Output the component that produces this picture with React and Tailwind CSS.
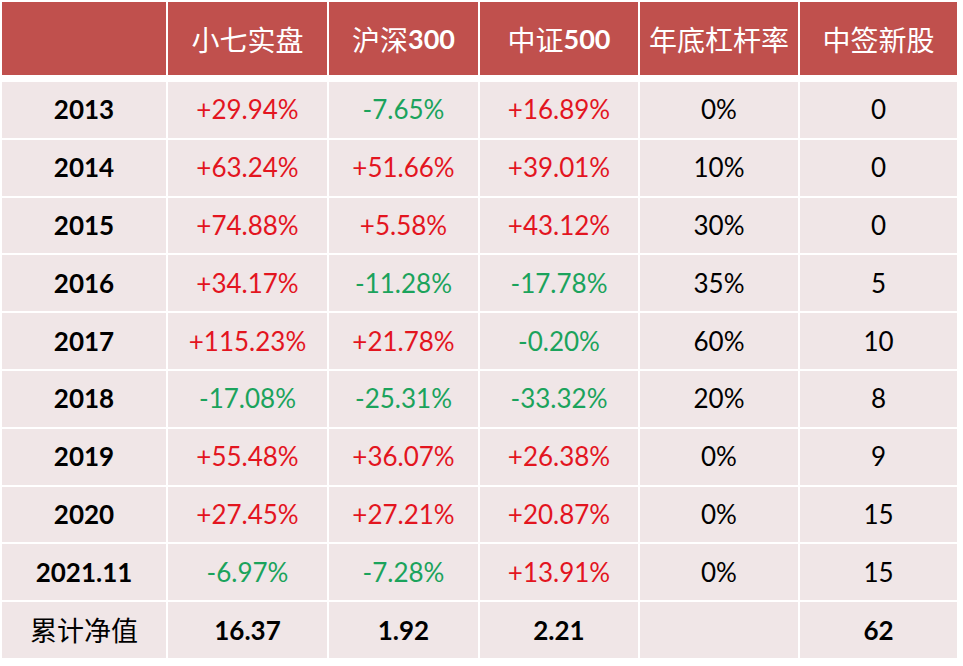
import React from "react";

const RED = "text-[#e3151f]";
const GREEN = "text-[#1ba35c]";

const rows = [
  ["2013", "+29.94%", "-7.65%", "+16.89%", "0%", "0"],
  ["2014", "+63.24%", "+51.66%", "+39.01%", "10%", "0"],
  ["2015", "+74.88%", "+5.58%", "+43.12%", "30%", "0"],
  ["2016", "+34.17%", "-11.28%", "-17.78%", "35%", "5"],
  ["2017", "+115.23%", "+21.78%", "-0.20%", "60%", "10"],
  ["2018", "-17.08%", "-25.31%", "-33.32%", "20%", "8"],
  ["2019", "+55.48%", "+36.07%", "+26.38%", "0%", "9"],
  ["2020", "+27.45%", "+27.21%", "+20.87%", "0%", "15"],
  ["2021.11", "-6.97%", "-7.28%", "+13.91%", "0%", "15"],
];

const cols = "grid grid-cols-[164px_159px_149px_158px_158px_157px] gap-x-[2px]";
const cjk = "font-['Noto_Sans_CJK_SC',serif]";
const num = "font-['Lato','Noto_Sans_CJK_SC',sans-serif]";

const Head = ({ cn, digits }) => (
  <div className="bg-[#c0504d] flex items-center justify-center text-white">
    <span className={`${cjk} text-[28px] leading-none`}>{cn}</span>
    {digits && <span className={`${num} font-bold text-[27px] leading-none`}>{digits}</span>}
  </div>
);

const Cell = ({ children, className = "" }) => (
  <div className={`bg-[#f0e6e7] flex items-center justify-center ${num} text-[26px] ${className}`}>
    {children}
  </div>
);

const tone = (v) => (v.startsWith("+") ? RED : GREEN);

export default function App() {
  return (
    <div className="w-[963px] h-[666px] bg-white pt-[2px] pl-[2px] flex flex-col gap-[7px]">
      <div className={`${cols} h-[73px]`}>
        <div className="bg-[#c0504d]" />
        <Head cn="小七实盘" />
        <Head cn="沪深" digits="300" />
        <Head cn="中证" digits="500" />
        <Head cn="年底杠杆率" />
        <Head cn="中签新股" />
      </div>
      <div className={`${cols} auto-rows-[55.8px] gap-y-[2px]`}>
        {rows.map((r) => (
          <React.Fragment key={r[0]}>
            <Cell className="font-bold text-black">{r[0]}</Cell>
            <Cell className={tone(r[1])}>{r[1]}</Cell>
            <Cell className={tone(r[2])}>{r[2]}</Cell>
            <Cell className={tone(r[3])}>{r[3]}</Cell>
            <Cell className="text-black">{r[4]}</Cell>
            <Cell className="text-black">{r[5]}</Cell>
          </React.Fragment>
        ))}
        <Cell className="text-black">
          <span className={`${cjk} text-[27px]`}>累计净值</span>
        </Cell>
        <Cell className="font-bold text-black">16.37</Cell>
        <Cell className="font-bold text-black">1.92</Cell>
        <Cell className="font-bold text-black">2.21</Cell>
        <Cell />
        <Cell className="font-bold text-black">62</Cell>
      </div>
    </div>
  );
}
